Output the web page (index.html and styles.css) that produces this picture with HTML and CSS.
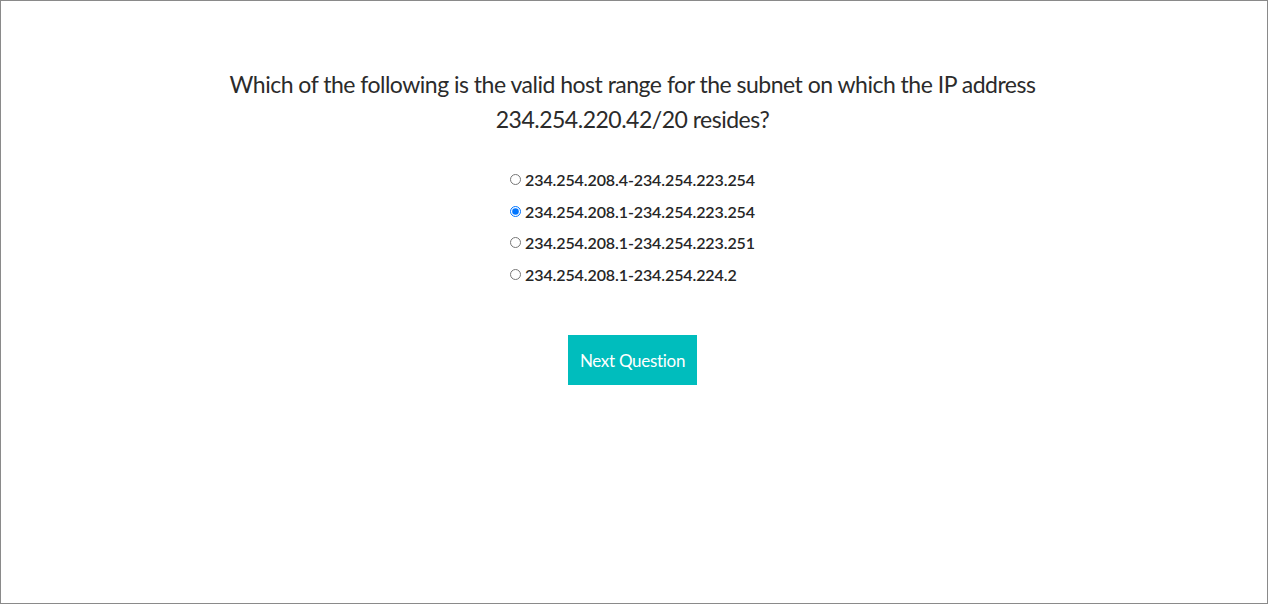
FILE: index.html
```html
<!DOCTYPE html>
<html>
<head>
<meta charset="utf-8">
<link rel="stylesheet" href="styles.css">
</head>
<body>
<div class="frame">
  <div class="quiz">
    <h1 class="question">Which of the following is the valid host range for the subnet on which the IP address<br>234.254.220.42/20 resides?</h1>
    <form class="options">
      <label class="option"><input type="radio" name="a"><span>234.254.208.4-234.254.223.254</span></label>
      <label class="option"><input type="radio" name="a" checked><span>234.254.208.1-234.254.223.254</span></label>
      <label class="option"><input type="radio" name="a"><span>234.254.208.1-234.254.223.251</span></label>
      <label class="option"><input type="radio" name="a"><span>234.254.208.1-234.254.224.2</span></label>
    </form>
    <button class="next" type="button">Next Question</button>
  </div>
</div>
</body>
</html>
```
FILE: styles.css
```css
html, body {
  margin: 0;
  padding: 0;
  background: #fff;
}
.frame {
  box-sizing: border-box;
  width: 1268px;
  height: 604px;
  border: 1px solid #8a8a8a;
}
.quiz {
  display: flex;
  flex-direction: column;
  align-items: center;
  padding-top: 66px;
  padding-right: 3px;
  font-family: Lato, sans-serif;
  font-variant-ligatures: none;
  color: #2b2b2b;
}
.question {
  margin: 0;
  font-size: 23px;
  font-weight: 400;
  line-height: 35px;
  letter-spacing: -0.5px;
  text-align: center;
}
.options {
  margin-top: 27px;
  display: flex;
  flex-direction: column;
}
.option {
  display: flex;
  align-items: center;
  height: 31.5px;
  font-size: 16px;
  font-weight: 600;
  letter-spacing: -0.1px;
  color: #262626;
}
.option input {
  width: 11px;
  height: 11px;
  margin: 0 4px 0 0;
}
.next {
  margin-top: 45px;
  width: 129px;
  height: 50px;
  border: none;
  background: #00bdbd;
  color: #fff;
  font-family: Lato, sans-serif;
  font-variant-ligatures: none;
  font-size: 17px;
  letter-spacing: -0.3px;
  padding: 0;
}
```
